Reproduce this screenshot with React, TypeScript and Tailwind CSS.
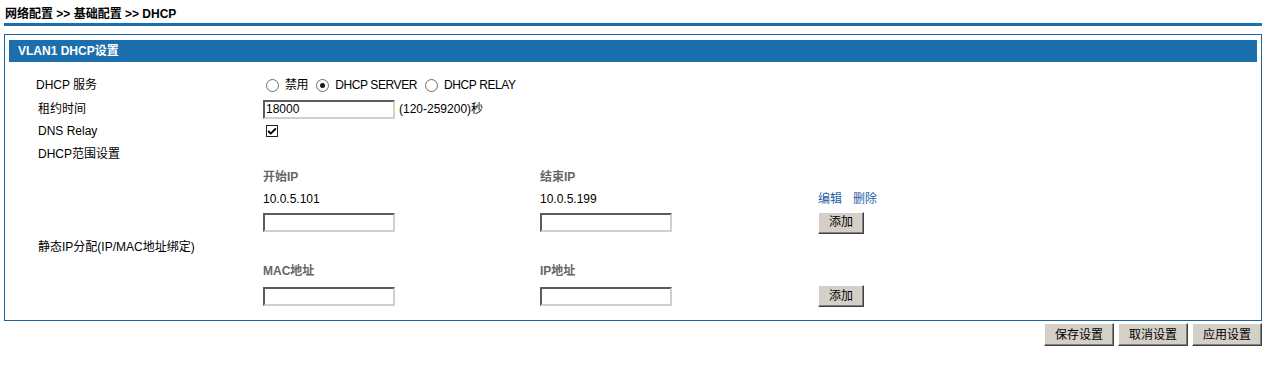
import { Check } from 'lucide-react'

// 经典路由器后台 —— VLAN1 DHCP 设置页

const font = 'font-["Liberation_Sans","Noto_Sans_CJK_SC",sans-serif]'

function TextBox({ value = '' }: { value?: string }) {
  return (
    <input
      readOnly
      value={value}
      className="w-[132px] h-[19px] bg-white border-2 border-t-[#5c5c5c] border-l-[#5c5c5c] border-b-[#d4d0c8] border-r-[#d4d0c8] px-[1px] text-[12px] leading-[14px] text-black outline-none"
    />
  )
}

function Btn({ label, w }: { label: string; w: string }) {
  return (
    <button
      className={`${w} bg-[#d4d0c8] border border-t-white border-l-white border-b-[#404040] border-r-[#404040] shadow-[inset_-1px_-1px_0_#808080] text-[12px] text-black flex items-center justify-center`}
    >
      {label}
    </button>
  )
}

function Radio({ checked, label }: { checked?: boolean; label: string }) {
  return (
    <span className="flex items-center">
      <span className="w-[13px] h-[13px] rounded-full border border-[#6e6e6e] bg-white flex items-center justify-center">
        {checked && <span className="w-[5px] h-[5px] rounded-full bg-[#1a1a1a]" />}
      </span>
      <span className="ml-[6px] tracking-[-0.4px]">{label}</span>
    </span>
  )
}

export default function App() {
  return (
    <div className={`w-[1274px] h-[367px] bg-white text-[12px] text-black ${font}`}>
      {/* 面包屑 */}
      <div className="h-[23px] pl-[5px] pt-[7px] leading-[14px] font-bold">网络配置 &gt;&gt; 基础配置 &gt;&gt; DHCP</div>
      <div className="ml-[4px] w-[1258px] h-[3px] bg-[#1c6fad]" />

      <div className="ml-[4px] mt-[8px] w-[1258px] border border-[#1a64a0] pt-[5px] px-[4px] pb-[11px]">
        <div className="h-[22px] bg-[#1c6fad] pl-[9px] flex items-center text-white font-bold">VLAN1 DHCP设置</div>

        <div className="mt-[11px] leading-[15px]">
          <div className="h-[24px] flex items-center pt-[1px]">
            <div className="w-[254px] pl-[27px]">DHCP 服务</div>
            <div className="ml-[3px] flex items-center gap-[8px]">
              <Radio label="禁用" />
              <Radio checked label="DHCP SERVER" />
              <Radio label="DHCP RELAY" />
            </div>
          </div>
          <div className="h-[24px] flex items-center">
            <div className="w-[254px] pl-[29px] pt-[1px]">租约时间</div>
            <TextBox value="18000" />
            <span className="ml-[4px] pt-[1px]">(120-259200)秒</span>
          </div>
          <div className="h-[20px] flex items-center">
            <div className="w-[254px] pl-[29px] pt-[1px]">DNS Relay</div>
            <span className="ml-[3px] w-[12px] h-[12px] border border-[#222] bg-white flex items-center justify-center">
              <Check size={11} strokeWidth={4.5} className="text-black" />
            </span>
          </div>
          <div className="h-[25px] flex items-center pt-[1px]">
            <div className="pl-[29px]">DHCP范围设置</div>
          </div>

          <div className="pl-[254px] grid grid-cols-[277px_278px_1fr]">
            <div className="h-[22px] flex items-center pt-[1px] font-bold text-[#666]">开始IP</div>
            <div className="h-[22px] flex items-center pt-[1px] font-bold text-[#666]">结束IP</div>
            <div />
            <div className="h-[22px] flex items-center pt-[1px]">10.0.5.101</div>
            <div className="h-[22px] flex items-center pt-[1px]">10.0.5.199</div>
            <div className="h-[22px] flex items-center pt-[1px] gap-[11px] text-[#1f5fa8]">
              <span>编辑</span>
              <span>删除</span>
            </div>
            <div className="h-[25px] flex items-center"><TextBox /></div>
            <div className="h-[25px] flex items-center"><TextBox /></div>
            <div className="h-[25px] flex items-center"><Btn label="添加" w="w-[46px] h-[22px]" /></div>
          </div>

          <div className="h-[24px] flex items-center pt-[1px]">
            <div className="pl-[29px]">静态IP分配(IP/MAC地址绑定)</div>
          </div>

          <div className="pl-[254px] grid grid-cols-[277px_278px_1fr]">
            <div className="h-[24px] flex items-center pt-[1px] font-bold text-[#666]">MAC地址</div>
            <div className="h-[24px] flex items-center pt-[1px] font-bold text-[#666]">IP地址</div>
            <div />
            <div className="h-[26px] flex items-center"><TextBox /></div>
            <div className="h-[26px] flex items-center"><TextBox /></div>
            <div className="h-[26px] flex items-center"><Btn label="添加" w="w-[46px] h-[22px]" /></div>
          </div>
        </div>
      </div>

      <div className="ml-[4px] mt-[2px] w-[1258px] flex justify-end gap-[4px]">
        <Btn label="保存设置" w="w-[70px] h-[23px]" />
        <Btn label="取消设置" w="w-[70px] h-[23px]" />
        <Btn label="应用设置" w="w-[70px] h-[23px]" />
      </div>
    </div>
  )
}
